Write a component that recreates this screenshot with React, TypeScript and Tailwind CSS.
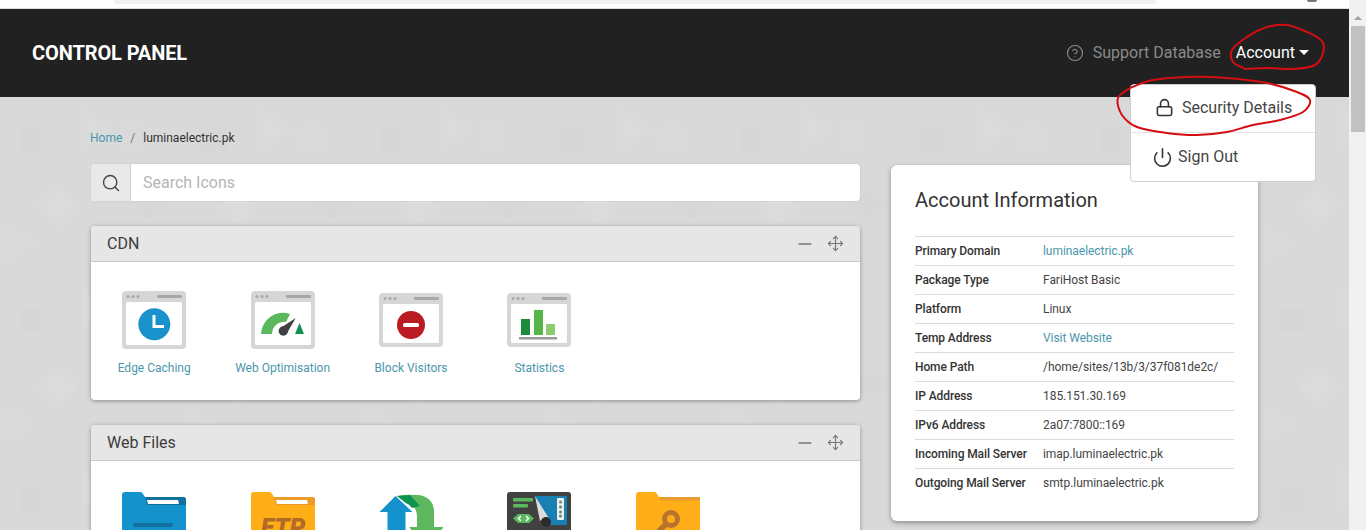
import { ReactNode } from "react";
import { Search, Lock, Power, CircleHelp, Minus, Move } from "lucide-react";

const FONT = "font-['Roboto','Liberation_Sans',sans-serif]";

// smooth curve through hand traced points (pen annotation)
function penPath(pts: number[][]) {
  let d = `M${pts[0][0]} ${pts[0][1]}`;
  for (let i = 0; i < pts.length - 1; i++) {
    const p0 = pts[Math.max(i - 1, 0)];
    const p1 = pts[i];
    const p2 = pts[i + 1];
    const p3 = pts[Math.min(i + 2, pts.length - 1)];
    d += ` C${p1[0] + (p2[0] - p0[0]) / 6} ${p1[1] + (p2[1] - p0[1]) / 6} ${p2[0] - (p3[0] - p1[0]) / 6} ${p2[1] - (p3[1] - p1[1]) / 6} ${p2[0]} ${p2[1]}`;
  }
  return d;
}

const accountLoop = [
  [1244, 68], [1233, 62], [1232, 50], [1247, 37], [1267, 27], [1287, 25], [1307, 32], [1322, 41],
  [1323, 53], [1315, 65], [1293, 69], [1267, 68], [1244, 69],
];
const securityLoop = [
  [1132, 87], [1118, 98], [1122, 115], [1137, 127], [1167, 133], [1197, 135], [1227, 132], [1253, 125],
  [1280, 120], [1303, 112], [1310, 100], [1297, 92], [1267, 83], [1227, 78], [1187, 77], [1153, 80], [1132, 87],
];

function Window({ h = 58, children }: { h?: number; children?: ReactNode }) {
  const y = (64 - h) / 2;
  return (
    <svg width="64" height="64" viewBox="0 0 64 64">
      <rect x="0" y={y} width="64" height={h} rx="4" fill="#d6d6d6" />
      <rect x="4" y={y + 11} width="56" height={h - 15} rx="1.5" fill="#fff" />
      <circle cx="6" cy={y + 5.5} r="1.5" fill="#a8a8a8" />
      <circle cx="11" cy={y + 5.5} r="1.5" fill="#a8a8a8" />
      <circle cx="16" cy={y + 5.5} r="1.5" fill="#a8a8a8" />
      <rect x="35" y={y + 4} width="25" height="3" rx="1" fill="#a8a8a8" />
      {children}
    </svg>
  );
}

function Folder({ fill, shade, strip = true, children }: { fill: string; shade: string; strip?: boolean; children?: ReactNode }) {
  return (
    <svg width="64" height="64" viewBox="0 0 64 64">
      <path d="M0 8a3 3 0 0 1 3-3h15a3 3 0 0 1 3 2l2 3h38a3 3 0 0 1 3 3v51H0z" fill={fill} />
      <path d="M23 10h38a3 3 0 0 1 3 3v5H25z" fill={shade} />
      {strip && <path d="M25 13h31l1 4H26z" fill="#fff" />}
      {children}
    </svg>
  );
}

const edgeIcon = (
  <Window>
    <circle cx="32.3" cy="36.3" r="16" fill="#1992cb" />
    <path d="M32 27v11.5h10" fill="none" stroke="#fff" strokeWidth="3" />
  </Window>
);
const gaugeIcon = (
  <Window>
    <path d="M10 46a22 22 0 0 1 29-20l-4 8a12 12 0 0 0-14 12z" fill="#5cb85c" />
    <circle cx="32.3" cy="43" r="4.7" fill="#414141" />
    <path d="M29.5 40L44.7 30 35.5 46z" fill="#414141" />
    <path d="M48.5 35l4.5 11h-9z" fill="#0d9350" />
  </Window>
);
const blockIcon = (
  <Window h={54}>
    <circle cx="32" cy="37" r="14" fill="#bb1c24" />
    <rect x="24" y="35" width="16" height="4" rx="1.6" fill="#fff" />
  </Window>
);
const statsIcon = (
  <Window h={54}>
    <rect x="14" y="31" width="9" height="16" fill="#1e8a3c" />
    <rect x="27" y="22" width="9" height="25" fill="#55b548" />
    <rect x="39" y="36" width="9" height="11" fill="#8ccb6e" />
    <rect x="12" y="49" width="38" height="2.5" fill="#9a9a9a" />
  </Window>
);
const folderIcon = (
  <Folder fill="#1492cc" shade="#11709c">
    <rect x="11" y="36" width="40" height="4" rx="2" fill="#11709c" />
  </Folder>
);
const ftpIcon = (
  <Folder fill="#ffae17" shade="#ec9a2c">
    <text x="32" y="49" textAnchor="middle" fontSize="25" fontWeight="900" fontStyle="italic" fontFamily="Roboto" fill="#b36a26">
      FTP
    </text>
  </Folder>
);
const transferIcon = (
  <svg width="64" height="64" viewBox="0 0 64 64">
    <path d="M18 9q10-2 20-1c10 0 17 7 17 16v40H38V30c0-8-4-13-11-14z" fill="#5cb85c" />
    <path d="M18 9l13-1 10 11-8 2q-3-4-6-5z" fill="#0d9350" />
    <path d="M30 40h35L47 60z" fill="#5cb85c" />
    <path d="M16.5 9L0.5 25h8v39h18V25h7z" fill="#1492cc" />
  </svg>
);
const editorIcon = (
  <svg width="64" height="64" viewBox="0 0 64 64">
    <rect x="0" y="5" width="64" height="59" rx="3" fill="#414141" />
    <path d="M28 9h32v29H43z" fill="#1880b3" />
    <rect x="50" y="11" width="7" height="22" rx="1" fill="#e8f1ec" />
    <circle cx="53.5" cy="15" r="1.5" fill="#7a7a7a" />
    <circle cx="53.5" cy="20" r="1.5" fill="#7a7a7a" />
    <circle cx="53.5" cy="25" r="1.5" fill="#7a7a7a" />
    <circle cx="53.5" cy="29" r="1.5" fill="#7a7a7a" />
    <rect x="6" y="11" width="20" height="3.5" rx="1" fill="#5cb85c" />
    <rect x="6" y="17" width="15" height="3.5" rx="1" fill="#5cb85c" />
    <path d="M28 9L43 33q-6-3-10 1z" fill="#dcdcdc" />
    <circle cx="39" cy="35" r="5" fill="#2b2b2b" />
    <path d="M11 27h11l5 4.5-5 4.5H11l-5-4.5z" fill="#5cb85c" />
    <path d="M14 29l-2.5 2.5 2.5 2.5M19 29l2.5 2.5-2.5 2.5" fill="none" stroke="#fff" strokeWidth="1.5" />
  </svg>
);
const keyIcon = (
  <Folder fill="#ffae17" shade="#ffae17" strip={false}>
    <path d="M24 10h40v3.5H24z" fill="#e89b2e" />
    <circle cx="35" cy="32" r="6.5" fill="none" stroke="#b8732c" strokeWidth="5" />
    <path d="M30 37L18 49" stroke="#b8732c" strokeWidth="5.5" />
  </Folder>
);

function Tile({ icon, label }: { icon: ReactNode; label?: string }) {
  return (
    <a className="flex w-[128.4px] flex-col items-center">
      <div className="h-16 w-16">{icon}</div>
      {label && <span className="mt-[7px] whitespace-nowrap text-[12px] leading-[18px] text-[#4a96ad]">{label}</span>}
    </a>
  );
}

function Panel({ title, items }: { title: string; items: { icon: ReactNode; label?: string }[] }) {
  return (
    <section className="mb-[25px] rounded-[4px] bg-white shadow-[0_1px_4px_rgba(0,0,0,0.35)]">
      <header className="flex h-[36px] items-center justify-between rounded-t-[4px] border-b border-[#c9c9c9] bg-[#e6e6e6] pl-4 pr-[16px]">
        <h2 className="text-[16px] font-normal text-[#3c3c3c]">{title}</h2>
        <div className="flex items-center gap-[12px] text-[#777]">
          <Minus size={20} strokeWidth={1.9} />
          <Move size={17} strokeWidth={1.6} />
        </div>
      </header>
      <div className="-ml-px flex h-[138px] pt-[26px]">
        {items.map((t, i) => (
          <Tile key={i} icon={t.icon} label={t.label} />
        ))}
      </div>
    </section>
  );
}

const info: [string, string, boolean?][] = [
  ["Primary Domain", "luminaelectric.pk", true],
  ["Package Type", "FariHost Basic"],
  ["Platform", "Linux"],
  ["Temp Address", "Visit Website", true],
  ["Home Path", "/home/sites/13b/3/37f081de2c/"],
  ["IP Address", "185.151.30.169"],
  ["IPv6 Address", "2a07:7800::169"],
  ["Incoming Mail Server", "imap.luminaelectric.pk"],
  ["Outgoing Mail Server", "smtp.luminaelectric.pk"],
];

export default function App() {
  return (
    <div className={`${FONT} relative flex h-[530px] w-full overflow-hidden bg-white`}>
      <div className="flex min-w-0 flex-1 flex-col">
        {/* browser chrome leftovers */}
        <div className="h-[9px] border-b border-[#dcdcdc] bg-white">
          <div className="ml-[114px] mr-[192px] h-[4px] rounded-b-[6px] bg-[#f1f1f1]" />
        </div>

        <nav className="flex h-[88px] shrink-0 items-center justify-between bg-[#212121] pl-8 pr-[40px]">
          <span className="-mt-[1px] text-[20px] font-bold tracking-[-0.1px] text-white">CONTROL PANEL</span>
          <div className="-mt-[1px] flex items-center text-[16px]">
            <CircleHelp size={18} className="mr-[9px] text-[#8a8a8a]" strokeWidth={1.6} />
            <span className="mr-[15px] text-[#8a8a8a]">Support Database</span>
            <span className="text-white">Account</span>
            <span className="ml-[4px] h-0 w-0 border-x-[5px] border-t-[5px] border-x-transparent border-t-white" />
          </div>
        </nav>

        <main className="relative flex-1 overflow-hidden bg-[#d9d9d9]">
          <svg className="absolute inset-0 h-full w-full" aria-hidden="true">
            <defs>
              <pattern id="bgp" width="180" height="180" patternUnits="userSpaceOnUse">
                <path d="M82 12l28 20-28 20z" fill="#dbdbdb" />
                <rect x="20" y="30" width="26" height="26" fill="#d7d7d7" />
                <path d="M58 90l20 20-20 20-20-20z" fill="#dbdbdb" />
                <path d="M150 90l18 16-18 16-18-16z" fill="#d7d7d7" />
                <path d="M5 130l30 16-30 18z" fill="#dadada" />
                <rect x="120" y="30" width="22" height="22" fill="#dadada" />
              </pattern>
            </defs>
            <rect width="100%" height="100%" fill="url(#bgp)" />
          </svg>

          <div className="relative flex items-start pl-[91px]">
            <div className="w-[769px]">
              <div className="-ml-px mt-[32px] flex h-[17px] items-center text-[12px] text-[#333]">
                <span className="text-[#4a96ad]">Home</span>
                <span className="mx-2 text-[#777]">/</span>
                <span>luminaelectric.pk</span>
              </div>
              <div className="mb-[25px] mt-[18px] flex h-[37px] rounded-[4px] bg-white shadow-[0_0_1px_rgba(0,0,0,0.25)]">
                <div className="flex w-[40px] items-center justify-center rounded-l-[4px] border-r border-[#cfcfcf] bg-[#e9e9e9] text-[#444]">
                  <Search size={20} strokeWidth={1.7} />
                </div>
                <div className="flex items-center pl-3 text-[16px] text-[#b5b5b5]">Search Icons</div>
              </div>
              <Panel
                title="CDN"
                items={[
                  { icon: edgeIcon, label: "Edge Caching" },
                  { icon: gaugeIcon, label: "Web Optimisation" },
                  { icon: blockIcon, label: "Block Visitors" },
                  { icon: statsIcon, label: "Statistics" },
                ]}
              />
              <Panel
                title="Web Files"
                items={[{ icon: folderIcon }, { icon: ftpIcon }, { icon: transferIcon }, { icon: editorIcon }, { icon: keyIcon }]}
              />
            </div>

            <aside className="ml-[31px] mt-[68px] h-[356px] w-[367px] rounded-[6px] bg-white px-6 shadow-[0_2px_5px_rgba(0,0,0,0.35)]">
              <h2 className="mb-[23px] mt-[22px] text-[20px] leading-[26px] text-[#333]">Account Information</h2>
              <div className="w-[319px]">
                {info.map(([k, v, link]) => (
                  <div key={k} className="flex h-[29px] items-center border-t border-[#dcdcdc] text-[12px]">
                    <span className="w-[128px] shrink-0 font-medium tracking-[-0.1px] text-[#333]">{k}</span>
                    <span className={link ? "tracking-[-0.05px] text-[#4a96ad]" : "tracking-[-0.05px] text-[#444]"}>{v}</span>
                  </div>
                ))}
              </div>
            </aside>
          </div>
        </main>
      </div>

      {/* scrollbar */}
      <div className="flex w-[17px] shrink-0 flex-col items-center bg-[#f1f1f1] pt-[16px]">
        <span className="h-0 w-0 border-x-[4px] border-b-[4px] border-x-transparent border-b-[#a3a3a3]" />
        <div className="mt-[6px] h-[106px] w-[14px] bg-[#c1c1c1]" />
      </div>

      {/* sliver of browser avatar cut off at the top */}
      <span className="absolute left-[1307px] top-0 h-[2px] w-[10px] rounded-b-[5px] bg-[#777]" />

      {/* account dropdown */}
      <div className="absolute left-[1130px] top-[84px] w-[186px] rounded-[4px] border border-[#cfcfcf] bg-white text-[16px] text-[#444]">
        <div className="flex h-[48px] items-center border-b border-[#e3e3e3] pb-[2px] pl-[23.5px]">
          <Lock size={19} strokeWidth={2} className="mr-[8.5px] text-[#333]" />
          Security Details
        </div>
        <div className="flex h-[48px] items-center pl-[20.5px]">
          <Power size={21} strokeWidth={1.8} className="mr-[5.5px] text-[#333]" />
          Sign Out
        </div>
      </div>

      {/* red pen marks */}
      <svg className="pointer-events-none absolute left-0 top-0 h-[530px] w-[1366px]" viewBox="0 0 1366 530" fill="none" aria-hidden="true">
        <path d={penPath(accountLoop)} stroke="#d40d12" strokeWidth="2" />
        <path d={penPath(securityLoop)} stroke="#d40d12" strokeWidth="2" />
      </svg>
    </div>
  );
}
